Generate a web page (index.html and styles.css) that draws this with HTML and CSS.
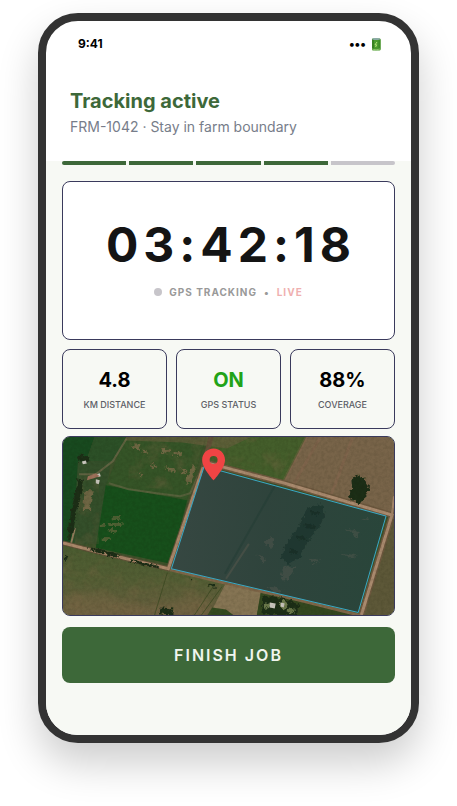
FILE: index.html
```html
<!DOCTYPE html>
<html lang="en">

<head>
  <meta charset="UTF-8">
  <meta name="viewport" content="width=device-width, initial-scale=1.0">
  <title>Tracking active</title>

  <link rel="stylesheet" href="styles.css">
</head>

<body>
  <div class="phone">
    <div class="status-bar">
      <span>9:41</span>
      <span class="status-icons">
        <span>•••</span>
        <svg class="battery" viewBox="0 0 10 13" aria-hidden="true">
          <rect x="1" y="0.500" width="8.500" height="12" rx="1" fill="#4b9b2c" />
          <rect x="1" y="1" width="2" height="11" rx="1" fill="#3a8221" />
          <rect x="7.500" y="1" width="2" height="11" rx="1" fill="#3f8b25" />
          <ellipse cx="5.200" cy="1" rx="4" ry="1" fill="#8aa9a5" />
          <path d="M6 4 4 6.8h1.6L4.6 9" fill="none" stroke="#b9e67c" />
          <path d="M1 11q4 1.600 8 0" fill="none" stroke="#8bc268" />
        </svg>
      </span>
    </div>

    <header class="header">
      <h1>Tracking active</h1>
      <p>FRM-1042 · Stay in farm boundary</p>
    </header>

    <main class="content">
      <div class="steps">
        <span class="step done"></span>
        <span class="step done"></span>
        <span class="step done"></span>
        <span class="step done"></span>
        <span class="step"></span>
      </div>

      <section class="timer-card">
        <div class="timer">03:42:18</div>
        <div class="tracking">
          <span class="dot"></span>
          <span>GPS TRACKING</span>
          <span>•</span>
          <span class="live">LIVE</span>
        </div>
      </section>

      <div class="stats">
        <div class="stat">
          <div class="stat-value">4.8</div>
          <div class="stat-label">KM DISTANCE</div>
        </div>
        <div class="stat">
          <div class="stat-value on">ON</div>
          <div class="stat-label">GPS STATUS</div>
        </div>
        <div class="stat">
          <div class="stat-value">88%</div>
          <div class="stat-label">COVERAGE</div>
        </div>
      </div>

      <div class="map">
        <svg viewBox="0 0 333 180" preserveAspectRatio="xMidYMid slice" role="img" aria-label="Farm boundary map">
          <defs>
            <filter id="grain" x="0" y="0" width="100%" height="100%" color-interpolation-filters="sRGB">
              <feTurbulence type="fractalNoise" baseFrequency="0.3" numOctaves="3" seed="8" />
              <feColorMatrix values="0 0 0 0 0.08  0 0 0 0 0.09  0 0 0 0 0.04  1.6 0 0 0 -0.6" />
            </filter>
            <filter id="patches" x="0" y="0" width="100%" height="100%" color-interpolation-filters="sRGB">
              <feTurbulence type="fractalNoise" baseFrequency="0.05" numOctaves="4" seed="21" result="n" />
              <feColorMatrix in="n" values="0 0 0 0 0.48  0 0 0 0 0.4  0 0 0 0 0.27  0 3 0 0 -1.4" />
              <feComposite in2="SourceGraphic" operator="in" />
            </filter>
            <filter id="rough" x="-10%" y="-10%" width="120%" height="120%">
              <feTurbulence type="fractalNoise" baseFrequency="0.25" numOctaves="3" seed="4" />
              <feDisplacementMap in="SourceGraphic" scale="7" xChannelSelector="R" yChannelSelector="G" />
            </filter>
            <filter id="soft"><feGaussianBlur stdDeviation="3" /></filter>
            <linearGradient id="pasture" x2="0" y2="1">
              <stop offset="0" stop-color="#4a5c30" />
              <stop offset=".5" stop-color="#535e34" />
              <stop offset="1" stop-color="#6a5f40" />
            </linearGradient>
            <linearGradient id="farm">
              <stop offset="0" stop-color="#364743" />
              <stop offset=".45" stop-color="#2e433d" />
              <stop offset="1" stop-color="#28453b" />
            </linearGradient>
          </defs>

          <!-- fields -->
          <rect width="333" height="180" fill="#3e512a" />
          <path d="M0 0H32L15 48 12 107 0 106Z" fill="#184a1f" />
          <path d="M32 0H64L50 25 16 25 15 48Z" fill="#2c5027" />
          <path d="M15 25H48L36 108 10 108Z" fill="#344f2a" />
          <path d="M62 3 143 4 125 64 43 49Z" fill="#355427" />
          <path d="M43 49 125 64 108 128 33 112Z" fill="#174f1b" />
          <path d="M0 107 106 133 165 147 150 180H0Z" fill="url(#pasture)" />
          <path d="M144 0H245L222 45 144 27Z" fill="#445e2b" />
          <path d="M64 0H190L165 12 120 6 62 4Z" fill="#6a6040" opacity=".6" />
          <path d="M245 0H333V78L222 45Z" fill="#786449" />
          <path d="M164 147 199 156 195 180H147Z" fill="#857453" />
          <path d="M150 172 164 174 172 180H145Z" fill="#344b20" />
          <path d="M199 158 297 178V180H195Z" fill="#34481f" />
          <path d="M328 88 333 84V180H303Z" fill="#5d5838" />

          <!-- bare soil -->
          <g filter="url(#patches)" opacity=".35">
            <path d="M66 5H142L128 55 66 50Z" />
            <path d="M0 114 160 150 148 180H0Z" />
            <path d="M148 2H240L218 40 150 25Z" />
            <path d="M18 30H36V108H12Z" />
          </g>
          <g fill="#86704f" opacity=".7" filter="url(#rough)">
            <path d="M68 8h8l2 4-8 1ZM79 14l6 1-3 4ZM99 12l9 1-3 4-6-2ZM112 14l8 2-2 4-7-2ZM103 31l9 1 3 4-9-1ZM118 32l7 2-4 4ZM88 26l7 4-5 3ZM76 36l5 2-3 3ZM122 46l9-17 3 1-7 18ZM22 54h8l-3 20h-7Z" />
          </g>
          <g fill="#6c6a40" opacity=".65" filter="url(#rough)">
            <path d="M49 80h8v4h-8ZM46 87h14v3H47ZM47 93h6v4h-6ZM39 101h9v3h-9ZM38 88h4v3h-4Z" />
          </g>
          <path d="M0 163q28-14 59 2t71-8l18 8-4 15H0Z" fill="#806a49" opacity=".35" filter="url(#soft)" />
          <path d="M245 0 222 45M258 2 232 48M291 2 270 58" fill="none" stroke="#8d6850" opacity=".3" stroke-width="3" />
          <path d="M105 137 92 180M153 148 132 180M160 151 139 180" fill="none" stroke="#38481f" opacity=".7" />

          <!-- tracks and roads -->
          <path d="M64 2 50 25 33 38 16 38" fill="none" stroke="#7e7154" stroke-width="2" opacity=".6" />
          <path d="M46 47 66 53 94 57 118 60 128 57 136 39" fill="none" stroke="#6c6b49" stroke-width="2" opacity=".6" />
          <path d="M12 92 8 108" stroke="#927c5c" stroke-width="2" />
          <path d="M0 107 35 116 106 133 141 31 149 0" fill="none" stroke="#5f5137" stroke-width="5" />
          <path d="M0 107 35 116 106 133 141 31" fill="none" stroke="#a98769" stroke-width="3" />
          <path d="M143 26 223 47 331 79 300 180" fill="none" stroke="#6d583e" stroke-width="6" />
          <path d="M143 26 223 47 331 79 300 180" fill="none" stroke="#a98a6e" stroke-width="3" />
          <path d="M331 78 333 60" stroke="#a58669" stroke-width="2" />
          <path d="M108 134 165 148 235 164 299 180" fill="none" stroke="#7f6648" stroke-width="3" />

          <!-- trees and sheds -->
          <g fill="#1e2e17" filter="url(#rough)">
            <path d="M16 42 20 44 18 60 14 76 9 100 5 104 8 75Z" />
            <path d="M22 112 46 116 58 121 56 122 35 117ZM68 123 98 131 97 133 68 126Z" />
            <path d="M290 42 294 38 302 42 308 49 305 60 298 68 292 64 287 61 291 53Z" />
            <path d="M99 172 111 173 110 180 98 179Z" />
            <path d="M147 148 154 149 153 152 146 150ZM127 142l4 1-2 3ZM2 119l3 2-3 7ZM16 18l10 2-1 6-10-2Z" />
            <path d="M200 161 212 161 225 164 238 170 235 180 201 179Z" />
          </g>
          <g fill="#6c7a4c" filter="url(#rough)">
            <circle cx="205" cy="170" r="3" />
            <circle cx="222" cy="169" r="4" />
            <circle cx="229" cy="175" r="3" />
          </g>
          <g fill="#c9c6bd">
            <path d="m19 25 4-1 1 3-4 1ZM34 38l3-1 1 3-3 1ZM33 43l4 1-1 4-3-1ZM208 167l6 1-1 5-5-1ZM219 167l4 1-1 4-3-1Z" />
          </g>
          <path d="m25 40 8-3 4 3-6 2-7 2Z" fill="#9c7059" />
          <rect width="333" height="180" filter="url(#grain)" opacity=".14" />

          <!-- farm boundary -->
          <path d="M142 30 325 80 297 177 109 133Z" fill="url(#farm)" opacity=".95" />
          <path d="M214 48 163 138" fill="none" stroke="#213b33" stroke-width="2" opacity=".5" />
          <path d="M187 108 164 143" stroke="#59584d" stroke-width="2" opacity=".5" />
          <g fill="#1d352e" opacity=".8" filter="url(#rough)">
            <path d="M248 70 262 68 263 78 258 91 246 105 239 121 227 129 219 122 224 108 237 90Z" />
          </g>
          <g fill="#625e56" opacity=".35" filter="url(#rough)">
            <path d="m208 101 6 2-5 9-6-4ZM223 130l10 2-7 12-8-1ZM285 92l15 5-5 4ZM194 117l10 7-3 3ZM299 84l8-2 1 3ZM247 123l12 1-6 5ZM280 117l17 3-10 2ZM205 150l16 4-8 4Z" />
          </g>
          <g fill="none" stroke="#152a22" opacity=".6" filter="url(#rough)">
            <path d="m249 76 9 2M242 89l11 3M236 101l8 2M228 115l9 2" stroke-width="4" />
          </g>
          <path d="M142 30 325 80 297 177 109 133Z" fill="none" stroke="#38a9c8" />

          <path fill="#ef4444" fill-rule="evenodd" d="M151.500 12C145 12 140 17 140 23.500 140 32 151.500 44 151.500 44S163 32 163 23.500C163 17 158 12 151.500 12ZM151.500 19.500a4 4 0 1 1 0 8 4 4 0 0 1 0-8Z" />
        </svg>
      </div>

      <button class="finish-btn" type="button">FINISH JOB</button>
    </main>
  </div>
</body>

</html>
```
FILE: styles.css
```css
* {
  box-sizing: border-box;
}

body {
  margin: 0;
  padding: 13px 38px 63px;
  background: #fff;
  font-family: Inter, "Liberation Sans", sans-serif;
}

.phone {
  max-width: 420px;
  margin: 0 auto;
  border: 8px solid #333;
  border-radius: 40px;
  background: #fff;
  overflow: hidden;
  box-shadow: 0 20px 40px rgba(0, 0, 0, 0.2);
}

.status-bar {
  display: flex;
  justify-content: space-between;
  align-items: center;
  padding: 15px 30px 0 32px;
  font-size: 12px;
  line-height: 16px;
  font-weight: 700;
  color: #000;
}

.status-icons {
  display: flex;
  align-items: center;
  gap: 5px;
}

.battery {
  width: 10px;
  height: 13px;
}

.header {
  padding: 37px 24px 24px;
}

h1 {
  margin: 0;
  font-size: 20px;
  line-height: 24px;
  font-weight: 700;
  color: #3d6839;
}

.header p {
  margin: 4px 0 0;
  font-size: 14px;
  line-height: 20px;
  color: #777d8a;
}

.content {
  padding: 0 16px 52px;
  background: #f7f9f4;
}

.steps {
  display: flex;
  gap: 3px;
  margin-bottom: 16px;
  border-radius: 2px;
  overflow: hidden;
}

.step {
  flex: 1;
  height: 4px;
  background: #c7c5ca;
}

.step.done {
  background: #3d6839;
}

.timer-card {
  padding: 34px 16px 41px;
  border: 1px solid #3a3a5c;
  border-radius: 8px;
  background: #fff;
  text-align: center;
}

/* left padding balances the spacing after the last digit */
.timer {
  padding-left: 5px;
  font-size: 48px;
  line-height: 58px;
  font-weight: 700;
  letter-spacing: 5px;
  color: #141414;
}

.tracking {
  display: flex;
  justify-content: center;
  align-items: center;
  gap: 7px;
  margin-top: 12px;
  font-size: 10px;
  line-height: 12px;
  font-weight: 700;
  letter-spacing: 1px;
  color: #999;
}

.dot {
  width: 8px;
  height: 8px;
  border-radius: 50%;
  background: #c7c5ca;
}

.live {
  color: #efb0b0;
}

.stats {
  display: grid;
  grid-template-columns: repeat(3, 1fr);
  gap: 9px;
  margin: 9px 0 7px;
}

.stat {
  padding: 18px 4px 17px;
  border: 1px solid #3a3a5c;
  border-radius: 8px;
  text-align: center;
}

.stat-value {
  font-size: 20px;
  line-height: 24px;
  font-weight: 700;
  color: #000;
}

.stat-value.on {
  color: #22a318;
}

.stat-label {
  margin-top: 7px;
  font-size: 9px;
  line-height: 12px;
  font-weight: 500;
  color: #5d6067;
}

.map {
  height: 180px;
  border: 1px solid #3a3a5c;
  border-radius: 8px;
  overflow: hidden;
}

.map svg {
  display: block;
  width: 100%;
  height: 100%;
}

.finish-btn {
  display: block;
  width: 100%;
  height: 56px;
  margin-top: 11px;
  border: none;
  border-radius: 8px;
  background: #3d6839;
  color: #f0f5ee;
  font-family: inherit;
  font-size: 16px;
  font-weight: 600;
  letter-spacing: 2px;
  cursor: pointer;
}

.finish-btn:hover {
  background: #33582f;
}
```
